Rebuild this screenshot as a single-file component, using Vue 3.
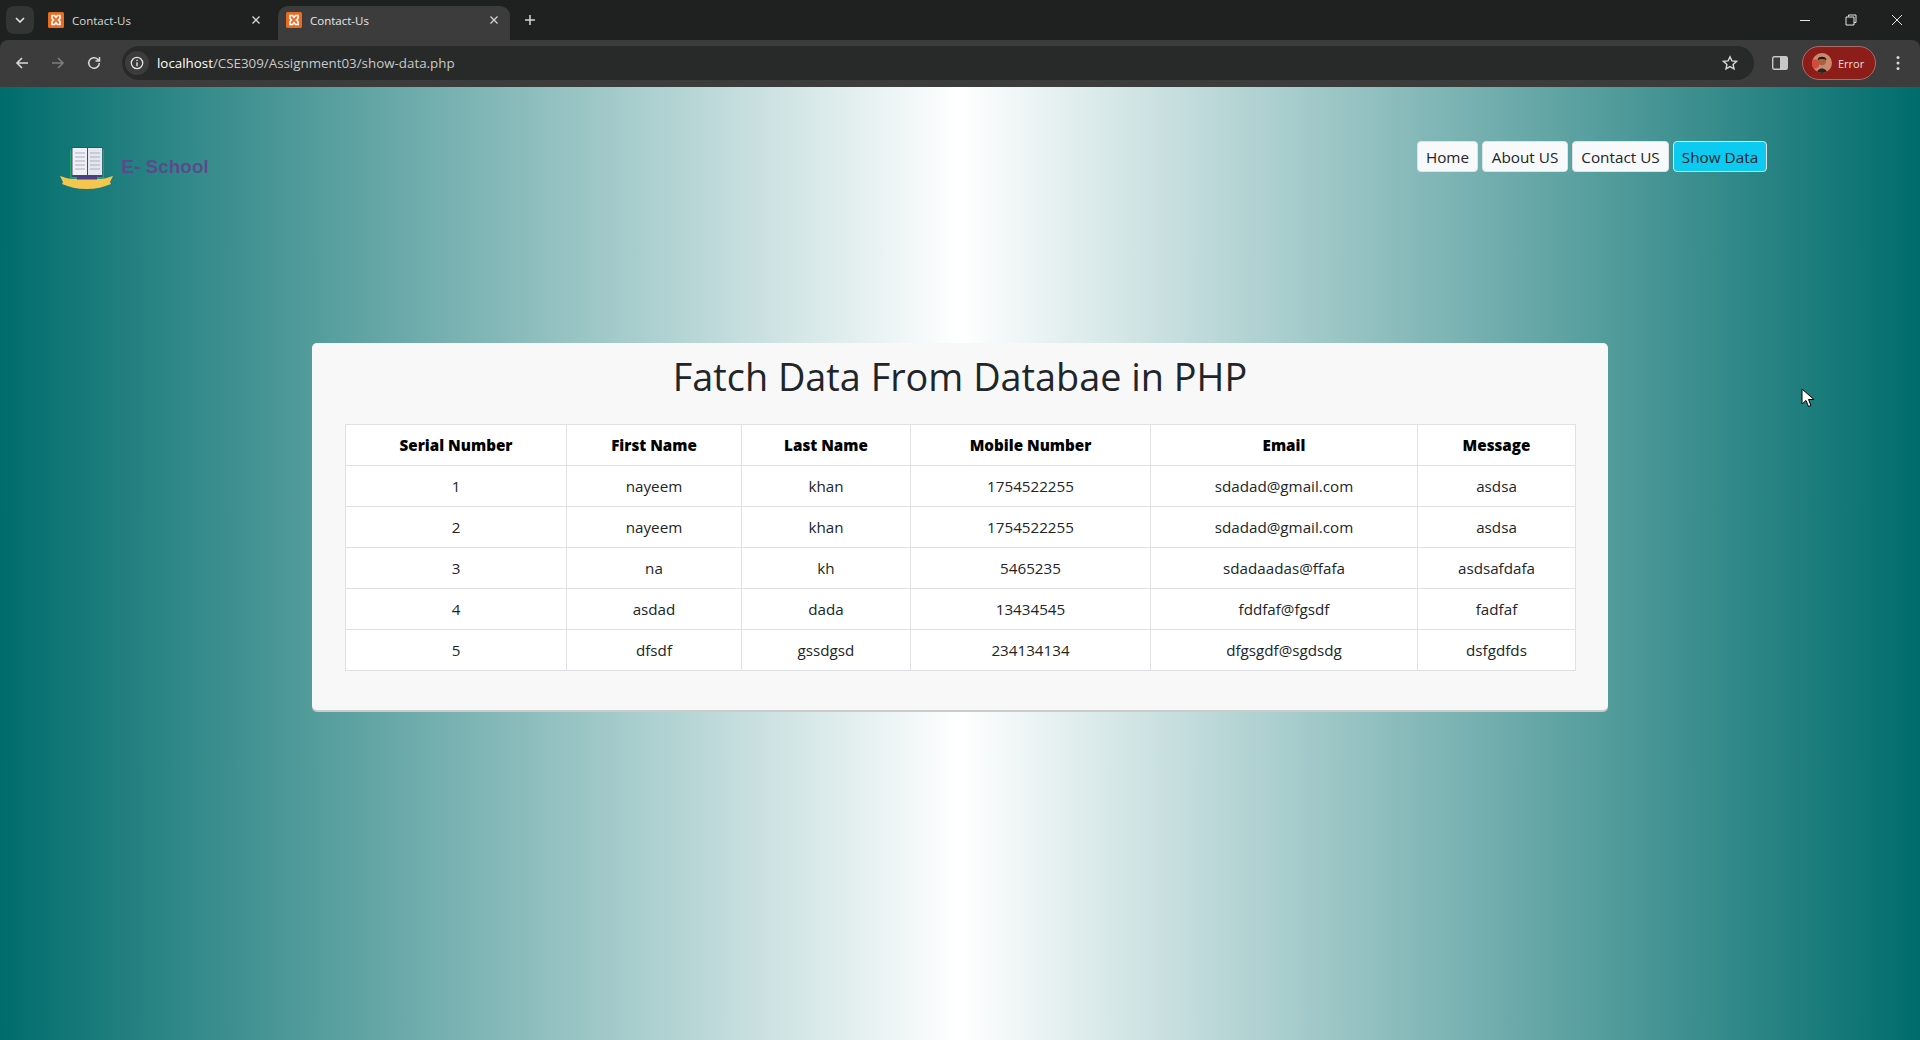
<template>
  <div class="window">
    <header class="tabstrip">
      <button class="tab-list">
        <svg width="10" height="6" viewBox="0 0 10 6"><path d="M1 1l4 4 4-4" fill="none" stroke="#e3e3e3" stroke-width="1.6" /></svg>
      </button>
      <div v-for="(tab, i) in tabs" :key="i" class="tab" :class="{ 'tab--active': tab.active }">
        <svg class="favicon" width="16" height="16" viewBox="0 0 16 16">
          <rect width="16" height="16" rx="1.5" fill="#ea6c22" />
          <path d="M4 3.5h2.6L8 5.4l1.4-1.9H12v3l-1.6 1.5L12 9.5v3H9.4L8 10.600 6.600 12.500H4v-3L5.600 8 4 6.500z" fill="none" stroke="#fff" stroke-width="1.6" />
        </svg>
        <span class="tab-title">{{ tab.title }}</span>
        <svg class="tab-close" width="10" height="10" viewBox="0 0 10 10"><path d="M1.500 1.500l7 7m0-7l-7 7" stroke="#d5d5d5" stroke-width="1.300" /></svg>
      </div>
      <svg class="new-tab" width="12" height="12" viewBox="0 0 12 12"><path d="M6 1v10M1 6h10" stroke="#d5d5d5" stroke-width="1.500" /></svg>
      <div class="win-controls">
        <svg width="12" height="12" viewBox="0 0 12 12"><path d="M1 6.500h10" stroke="#e3e3e3" /></svg>
        <svg width="12" height="12" viewBox="0 0 12 12"><path d="M3.500 2.500V1h7.500v7.500H9M1 3h8v8H1z" fill="none" stroke="#e3e3e3" /></svg>
        <svg width="12" height="12" viewBox="0 0 12 12"><path d="M1 1l10 10m0-10L1 11" stroke="#e3e3e3" /></svg>
      </div>
    </header>

    <div class="toolbar">
      <svg class="tool" width="16" height="16" viewBox="0 0 16 16"><path d="M14 8H3M8 3L3 8l5 5" fill="none" stroke="#d8d8d8" stroke-width="1.600" /></svg>
      <svg class="tool" width="16" height="16" viewBox="0 0 16 16"><path d="M2 8h11M8 3l5 5-5 5" fill="none" stroke="#7d7d7d" stroke-width="1.600" /></svg>
      <svg class="tool" width="16" height="16" viewBox="0 0 16 16"><path d="M13.300 8a5.300 5.300 0 1 1-1.600-3.800L13.500 6M13.500 2v4h-4" fill="none" stroke="#d8d8d8" stroke-width="1.500" /></svg>
      <div class="omnibox">
        <span class="site-info">
          <svg width="14" height="14" viewBox="0 0 14 14"><circle cx="7" cy="7" r="5.700" fill="none" stroke="#e3e3e3" stroke-width="1.300" /><path d="M7 6.200v4M7 3.700v1.300" stroke="#e3e3e3" stroke-width="1.400" /></svg>
        </span>
        <span class="url"><b>localhost</b>/CSE309/Assignment03/show-data.php</span>
        <svg class="star" width="16" height="16" viewBox="0 0 16 16"><path d="M8 1.800l1.900 4.100 4.500.5-3.300 3 .9 4.400L8 11.600l-4 2.200.9-4.400-3.300-3 4.500-.5z" fill="none" stroke="#d8d8d8" stroke-width="1.400" /></svg>
      </div>
      <svg class="panel" width="16" height="14" viewBox="0 0 16 14"><rect x=".7" y=".7" width="14.600" height="12.600" rx="1.500" fill="none" stroke="#c8c8c8" stroke-width="1.400" /><rect x="8" y="1" width="7" height="12" fill="#c8c8c8" /></svg>
      <div class="profile">
        <svg width="20" height="20" viewBox="0 0 20 20">
          <clipPath id="avatar-clip"><circle cx="10" cy="10" r="10" /></clipPath>
          <g clip-path="url(#avatar-clip)">
            <rect width="20" height="20" fill="#c9896f" />
            <circle cx="3" cy="11" r="4.500" fill="#d8483a" />
            <circle cx="10" cy="8" r="4.200" fill="#a8623f" />
            <path d="M5.500 7c0-4.500 9-4.500 9 0-2-1.500-7-1.500-9 0z" fill="#1f1512" />
            <path d="M5 20c0-6 10-6 10 0z" fill="#2b2320" />
          </g>
        </svg>
        <span>Error</span>
      </div>
      <svg class="kebab" width="4" height="16" viewBox="0 0 4 16"><circle cx="2" cy="2.500" r="1.500" fill="#d8d8d8" /><circle cx="2" cy="8" r="1.500" fill="#d8d8d8" /><circle cx="2" cy="13.500" r="1.500" fill="#d8d8d8" /></svg>
    </div>

    <main class="page">
      <nav class="topbar">
        <div class="brand">
          <svg width="53" height="43" viewBox="0 0 53 43">
            <rect x="10" y="2" width="34" height="31" rx="2" fill="#1fa36a" />
            <rect x="11.500" y="0" width="31" height="30" fill="#4a3f86" />
            <rect x="12.500" y="1" width="14.500" height="27" fill="#eef0f5" />
            <rect x="28" y="1" width="14" height="27" fill="#e4e7ee" />
            <path d="M15 6h10M15 10h10M15 14h10M15 18h10M15 22h10M30 6h10M30 10h10M30 14h10M30 18h10M30 22h10" stroke="#a9aec0" stroke-width="1.200" />
            <path d="M0 29c5 1.500 8 2.500 11 3h31c3-.5 6-1.500 11-3l-3 6 1 2c-7 3-15 5-24.500 5S9 40 2 37l1-2z" fill="#f4c64f" />
            <rect x="17" y="30" width="20" height="2.500" fill="#4a3f86" />
          </svg>
          <span class="brand-name">E- School</span>
        </div>
        <div class="nav-links">
          <a v-for="link in links" :key="link.label" class="nav-btn" :class="{ 'nav-btn--active': link.active }">{{ link.label }}</a>
        </div>
      </nav>

      <section class="card">
        <h1>Fatch Data From Databae in PHP</h1>
        <table>
          <colgroup>
            <col v-for="w in colWidths" :key="w" :style="{ width: w + 'px' }" />
          </colgroup>
          <thead>
            <tr>
              <th v-for="h in headers" :key="h">{{ h }}</th>
            </tr>
          </thead>
          <tbody>
            <tr v-for="row in rows" :key="row[0]">
              <td v-for="(cell, i) in row" :key="i">{{ cell }}</td>
            </tr>
          </tbody>
        </table>
      </section>

      <svg class="cursor" width="14" height="20" viewBox="0 0 14 20">
        <path d="M1 1v15l4-3.500 2.500 6 2.500-1-2.500-6H13z" fill="#fff" stroke="#000" />
      </svg>
    </main>
  </div>
</template>

<script setup>
const tabs = [
  { title: 'Contact-Us', active: false },
  { title: 'Contact-Us', active: true },
]

const links = [
  { label: 'Home' },
  { label: 'About US' },
  { label: 'Contact US' },
  { label: 'Show Data', active: true },
]

const headers = ['Serial Number', 'First Name', 'Last Name', 'Mobile Number', 'Email', 'Message']
const colWidths = [221, 175, 169, 240, 267, 158]

const rows = [
  ['1', 'nayeem', 'khan', '1754522255', 'sdadad@gmail.com', 'asdsa'],
  ['2', 'nayeem', 'khan', '1754522255', 'sdadad@gmail.com', 'asdsa'],
  ['3', 'na', 'kh', '5465235', 'sdadaadas@ffafa', 'asdsafdafa'],
  ['4', 'asdad', 'dada', '13434545', 'fddfaf@fgsdf', 'fadfaf'],
  ['5', 'dfsdf', 'gssdgsd', '234134134', 'dfgsgdf@sgdsdg', 'dsfgdfds'],
]
</script>

<style scoped>
.window {
  width: 1920px;
  height: 1040px;
  overflow: hidden;
  display: flex;
  flex-direction: column;
  background: #1f2120;
  font-family: "Open Sans", "Noto Sans", sans-serif;
}

.tabstrip {
  height: 40px;
  flex: none;
  display: flex;
  align-items: flex-end;
  padding-left: 6px;
  color: #d8d8d8;
}

.tab-list {
  width: 28px;
  height: 28px;
  margin-bottom: 6px;
  margin-right: 6px;
  padding: 0;
  border: none;
  border-radius: 8px;
  background: #333534;
  display: flex;
  align-items: center;
  justify-content: center;
}

.tab {
  width: 232px;
  height: 34px;
  padding: 0 11px 6px 8px;
  box-sizing: border-box;
  border-radius: 10px 10px 0 0;
  display: flex;
  align-items: center;
  font-size: 11.5px;
}
.tab + .tab { margin-left: 6px; }
.tab--active { background: #3c3c3c; color: #e8e8e8; }

.favicon { margin-right: 8px; }
.tab-title { flex: 1; }

.new-tab { margin: 0 0 14px 14px; }

.win-controls {
  margin-left: auto;
  width: 138px;
  height: 40px;
  display: flex;
  align-items: center;
  justify-content: space-around;
}

.toolbar {
  height: 47px;
  flex: none;
  background: #3c3c3c;
  display: flex;
  align-items: center;
  padding: 0 0 1px 14px;
  border-radius: 8px 8px 0 0;
  box-sizing: border-box;
}
.tool { margin-right: 20px; }

.omnibox {
  width: 1632px;
  height: 34px;
  padding: 0 16px 0 3px;
  border-radius: 17px;
  background: #282a29;
  display: flex;
  align-items: center;
  box-sizing: border-box;
  color: #c9c9c9;
  font-size: 13.35px;
}
.site-info {
  width: 24px;
  height: 24px;
  border-radius: 50%;
  background: #3c3c3c;
  display: flex;
  align-items: center;
  justify-content: center;
  margin-right: 8px;
}
.url b { font-weight: 400; color: #fff; }
.star { margin-left: auto; }

.panel { margin-left: 18px; }

.profile {
  width: 74px;
  height: 34px;
  margin-left: 14px;
  border: 1px solid #a5706c;
  border-radius: 17px;
  background: #8c1d18;
  box-sizing: border-box;
  display: flex;
  align-items: center;
  gap: 6px;
  padding-left: 9px;
  color: #f0dcda;
  font-size: 11px;
}

.kebab { margin-left: 20px; }

.page {
  position: relative;
  flex: 1;
  background: linear-gradient(to right, #006c6c, #fff, #006c6c);
}

.topbar {
  height: 202px;
  padding: 54px 153px 0 60px;
  display: flex;
  justify-content: space-between;
  align-items: flex-start;
}

.brand {
  display: flex;
  align-items: flex-start;
  margin-top: 6px;
}
.brand-name {
  margin-left: 8px;
  margin-top: 9px;
  font-family: "Liberation Sans", sans-serif;
  font-size: 19px;
  font-weight: 700;
  color: #5a4a8c;
  filter: blur(0.4px);
}

.nav-links {
  display: flex;
  gap: 4px;
}
.nav-btn {
  height: 31px;
  border: 1px solid #dee2e6;
  border-radius: 4px;
  background: #f8f9fa;
  box-sizing: border-box;
  display: flex;
  align-items: center;
  justify-content: center;
  font-size: 15.3px;
  color: #212529;
}
.nav-btn:nth-child(1) { width: 61px; }
.nav-btn:nth-child(2) { width: 86px; }
.nav-btn:nth-child(3) { width: 97px; }
.nav-btn:nth-child(4) { width: 94px; }
.nav-btn--active { background: #0dcaf0; }

.card {
  width: 1296px;
  height: 367px;
  margin: 0 auto;
  padding: 0 33px;
  box-sizing: border-box;
  background: #f8f8f8;
  border-radius: 5px;
  box-shadow: 0 2px 0 #cccccc;
}

h1 {
  margin: 0;
  height: 81px;
  padding-top: 10px;
  box-sizing: border-box;
  text-align: center;
  font-size: 37.8px;
  font-weight: 400;
  line-height: 48px;
  color: #212529;
}

table {
  width: 1230px;
  table-layout: fixed;
  border-collapse: collapse;
  background: #fff;
  color: #212529;
  font-size: 15.2px;
}
th, td {
  height: 41px;
  padding: 0 8px;
  border: 1px solid #dee2e6;
  text-align: center;
  box-sizing: border-box;
}
th {
  font-weight: 800;
  color: #000;
}

.cursor {
  position: absolute;
  left: 1801px;
  top: 301px;
}
</style>
